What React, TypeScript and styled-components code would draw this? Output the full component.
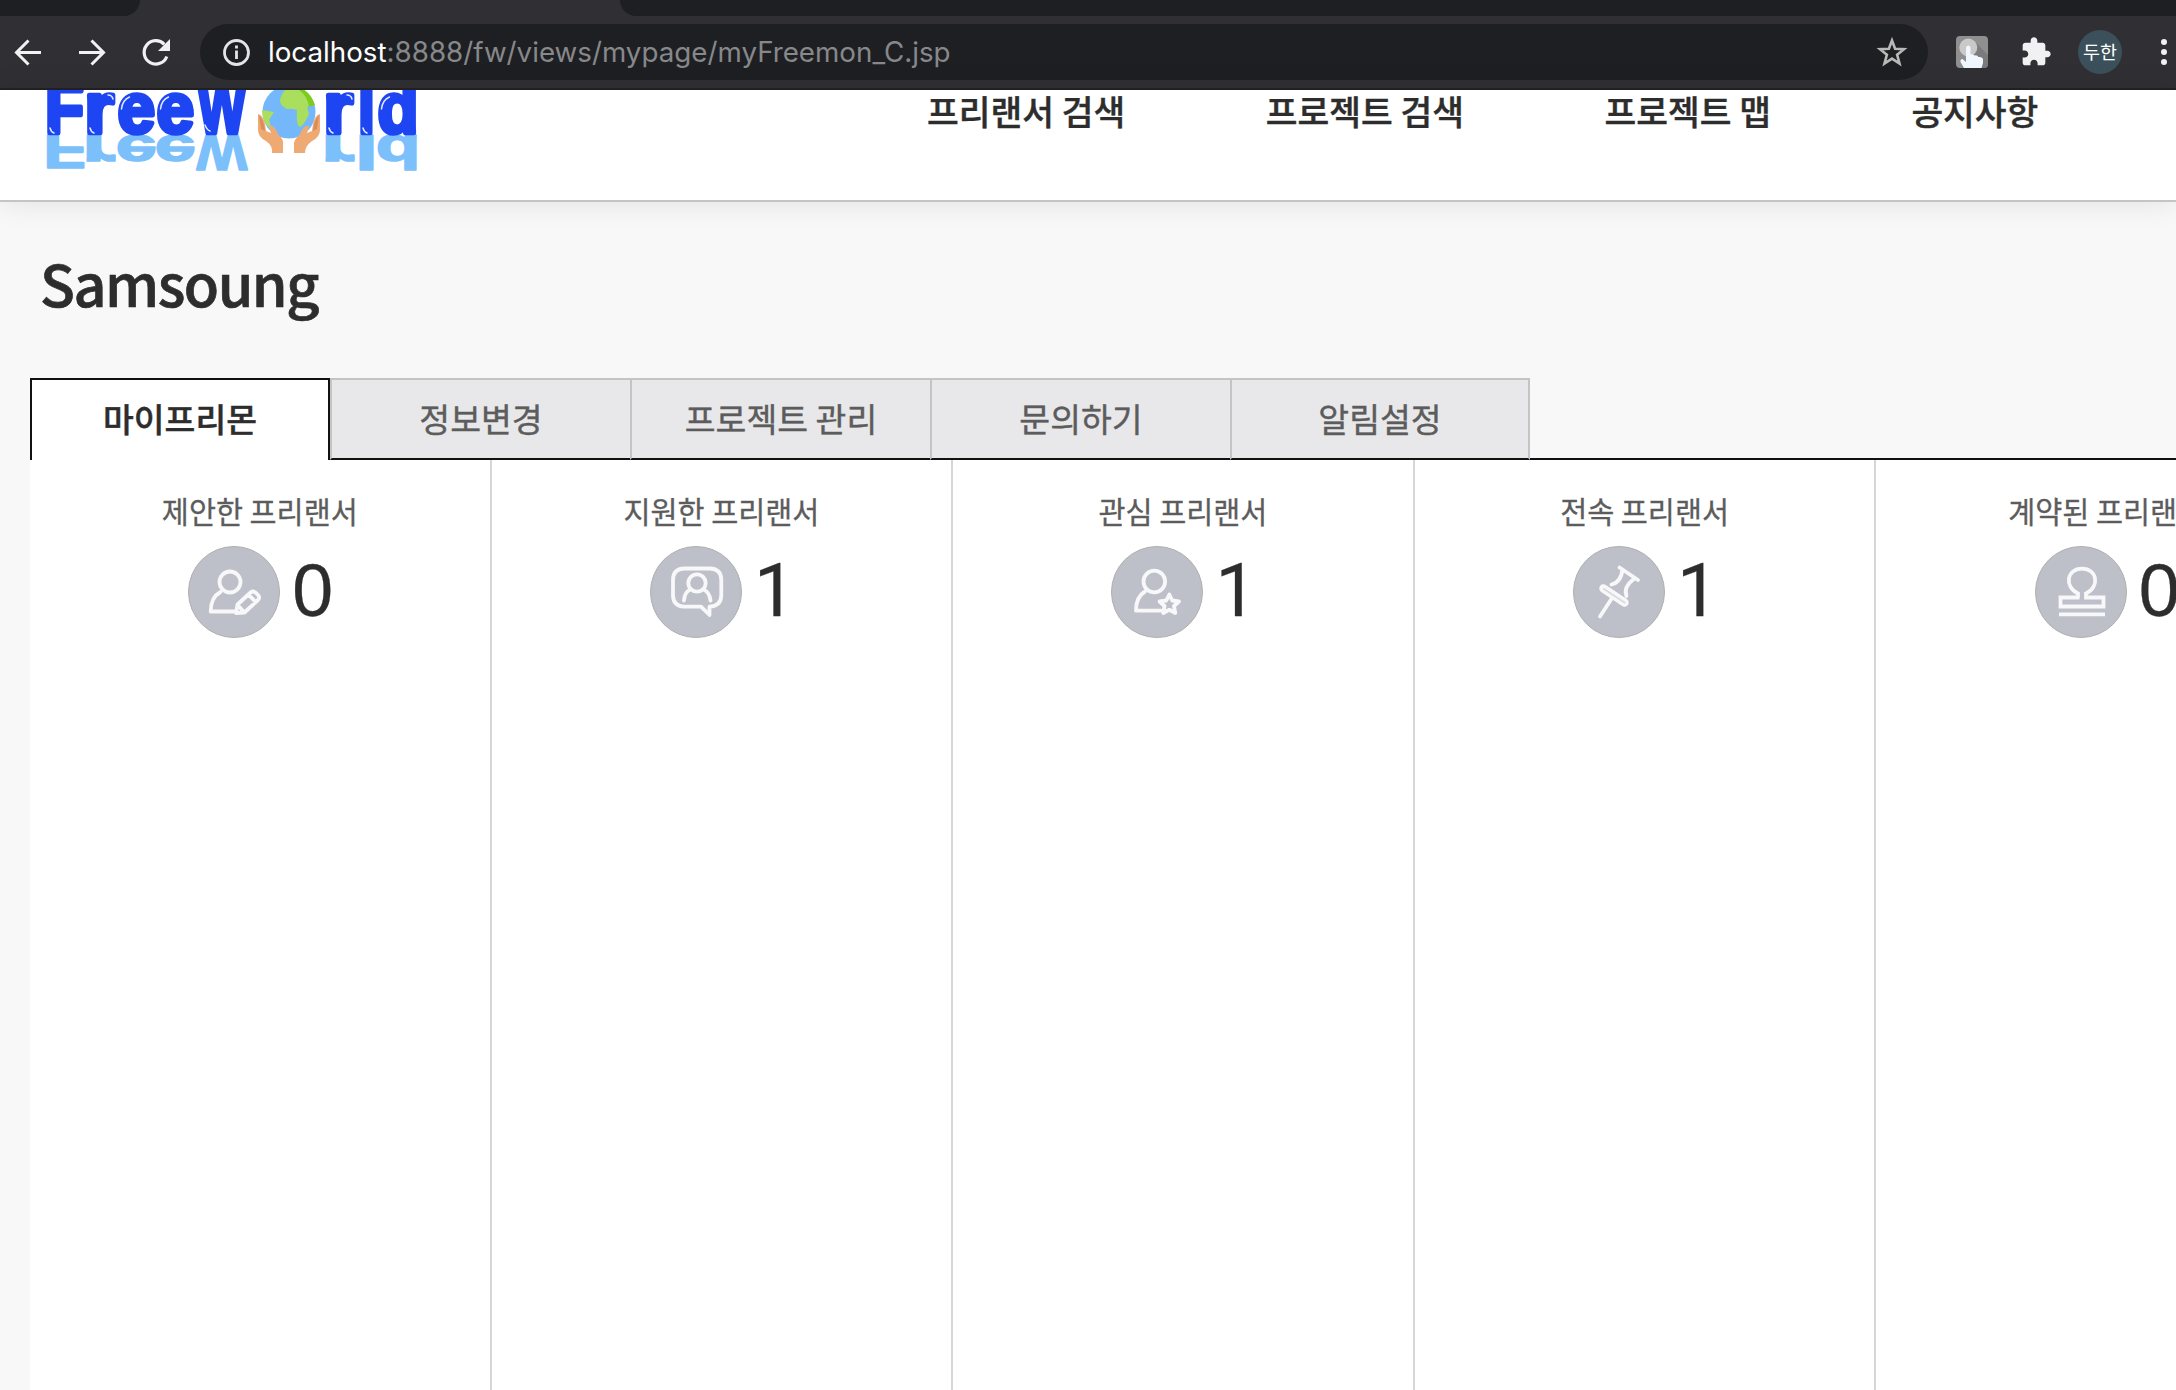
import React from "react";
import styled, { createGlobalStyle } from "styled-components";

const kr = `"Noto Sans CJK KR", "Noto Sans", sans-serif`;

const GlobalStyle = createGlobalStyle`
  *, *::before, *::after { box-sizing: border-box; }
  body { margin: 0; background: #f8f8f8; font-family: ${kr}; overflow: hidden; }
`;

const Page = styled.div`
  width: 2176px;
  height: 1390px;
  overflow: hidden;
  display: flex;
  flex-direction: column;
  background: #f8f8f8;
`;

/* browser chrome */
const Chrome = styled.div`
  flex: none;
  height: 90px;
  background: #302f33;
  border-bottom: 2px solid #232124;
`;
const TabStrip = styled.div`
  display: flex;
  justify-content: space-between;
  height: 16px;
`;
const InactiveTabs = styled.div<{ $width: number; $side: "left" | "right" }>`
  width: ${(p) => p.$width}px;
  background: #1e1f23;
  border-radius: ${(p) => (p.$side === "left" ? "0 0 16px 0" : "0 0 0 16px")};
`;
const Toolbar = styled.div`
  display: flex;
  align-items: center;
  height: 72px;
`;
const NavButtons = styled.div`
  flex: none;
  display: flex;
  gap: 32px;
  width: 200px;
  padding-left: 12px;
  svg { display: block; margin-top: -1px; }
`;
const Omnibox = styled.div`
  flex: none;
  display: flex;
  align-items: center;
  width: 1728px;
  height: 56px;
  padding: 0 20px;
  border-radius: 28px;
  background: #1e1f23;
`;
const Url = styled.div`
  flex: 1;
  padding-left: 16px;
  font: 400 27.75px/56px Inter, sans-serif;
  color: #87888a;
  white-space: nowrap;
`;
const Host = styled.span`
  color: #fff;
`;
const Actions = styled.div`
  flex: none;
  display: flex;
  align-items: center;
  padding-left: 28px;
`;
const Extension = styled.div`
  width: 32px;
  height: 32px;
  margin-right: 32px;
  svg { display: block; }
`;
const Puzzle = styled.svg`
  display: block;
  margin-right: 26px;
`;
const Avatar = styled.div`
  width: 44px;
  height: 44px;
  margin-right: 39px;
  border-radius: 50%;
  background: #3b505a;
  color: #fff;
  font: 400 18.5px/43px ${kr};
  text-align: center;
`;
const Dots = styled.div`
  display: flex;
  flex-direction: column;
  gap: 4px;
  i { width: 6px; height: 6px; border-radius: 50%; background: #f1f1f3; }
`;

/* site header */
const Header = styled.header`
  flex: none;
  position: relative;
  z-index: 1;
  display: flex;
  align-items: flex-start;
  height: 112px;
  padding-left: 40px;
  background: #fff;
  border-bottom: 2px solid #c4c4c4;
  box-shadow: 0 0 28px rgba(0, 0, 0, 0.1);
`;
const Logo = styled.svg`
  flex: none;
  display: block;
  width: 387px;
  height: 100px;
  margin-right: 500px;
`;
const MainNav = styled.nav`
  display: flex;
  gap: 140.5px;
`;
const NavLink = styled.span`
  font: 500 34.5px/41px ${kr};
  -webkit-text-stroke: 0.4px #2d2d2d;
  color: #2d2d2d;
  white-space: nowrap;
`;

const Title = styled.h1`
  flex: none;
  margin: 0;
  height: 176px;
  padding: 38px 0 0 40px;
  font: 500 57.5px/84px ${kr};
  letter-spacing: -1.5px;
  -webkit-text-stroke: 0.7px #2d2d2d;
  color: #2d2d2d;
`;

const Tabs = styled.div`
  flex: none;
  display: flex;
  height: 82px;
  padding-left: 30px;
`;
const Tab = styled.div<{ $active?: boolean }>`
  width: 300px;
  border: 2px solid ${(p) => (p.$active ? "#111" : "#c4c4c4")};
  ${(p) => !p.$active && "border-right-width: 0;"}
  border-bottom: ${(p) => (p.$active ? "0" : "2px solid #111")};
  background: ${(p) => (p.$active ? "#fff" : "#e8e8ea")};
  color: ${(p) => (p.$active ? "#2d2d2d" : "#5c5c5c")};
  -webkit-text-stroke: 0.4px currentColor;
  font: ${(p) => (p.$active ? 500 : 400)} 33.5px/75px ${kr};
  text-align: center;
  white-space: nowrap;
  &:last-of-type { border-right-width: 2px; }
`;
const TabRest = styled.span`
  flex: 1;
  border-bottom: 2px solid #111;
`;

const Board = styled.main`
  flex: 1;
  display: flex;
  margin-left: 30px;
  background: #fff;
  overflow: hidden;
`;
const Column = styled.section`
  flex: none;
  width: 461.6px;
  padding-top: 30px;
  border-right: 2px solid #d6d6d6;
  display: flex;
  flex-direction: column;
  align-items: center;
`;
const Label = styled.div`
  height: 56px;
  font: 400 29.4px/40px ${kr};
  -webkit-text-stroke: 0.3px #5c5c5c;
  color: #5c5c5c;
  white-space: nowrap;
`;
const Stat = styled.div`
  display: flex;
  align-items: center;
  height: 92px;
  gap: 12px;
  padding-left: 1px;
`;
const Badge = styled.div`
  width: 92px;
  height: 92px;
  border: 1.5px solid #b0b0b0;
  border-radius: 50%;
  background: #bdc0c8;
  svg { display: block; margin: -1px; }
`;
const Count = styled.span<{ $one: boolean }>`
  width: 40px;
  padding-bottom: 2px;
  font: 400 73.5px/90px ${(p) => (p.$one ? "Roboto" : '"Liberation Sans"')}, sans-serif;
  -webkit-text-stroke: 0.3px #2d2d2d;
  color: #2d2d2d;
`;

const icons: Record<string, React.ReactNode> = {
  propose: (
    <>
      <circle cx="42" cy="36" r="10.5" />
      <path d="M32.5 46C26 49.500 22.700 55 22.700 65.500H47" />
      <path d="M48 67L49.500 58.500L62.500 46.500Q65 44.500 67.500 46.500L70.500 49.500Q72 52 70 54L56.500 66.500ZM60.500 48.500L67.500 56M49.500 59L56 66" />
    </>
  ),
  apply: (
    <>
      <path d="M34 22.500H60Q71.300 23 71.300 34V49Q71.300 60 59.500 60.700V69L51 60.700H34Q23 60 23 49V34Q23 23 34 22.500Z" />
      <circle cx="47" cy="37" r="8.700" />
      <path d="M34 54.500Q34.500 46 40.500 43.500M60.500 54.500Q59.500 46 53.500 43.500" />
    </>
  ),
  interest: (
    <>
      <circle cx="43.3" cy="35.5" r="10.8" />
      <path d="M34 45.500C28 49 25 55 25 64.700H50" />
      <path d="M58.300 48.500L61.200 54.500L68 55.500L63 60L64.300 67L58.300 63.800L52.300 67L53.500 60L48.500 55.500L55.300 54.500Z" />
    </>
  ),
  exclusive: (
    <>
      <path d="M46.500 21.500L65 34M49.500 23.500C48.500 32 45 37 38.500 38.500M61.500 32.500C54 38 51 43.500 53.500 50M40 50.500L27 70.500" />
      <path strokeWidth="8.5" d="M30.500 42.500L51.500 56.500" />
      <path strokeWidth="2" stroke="#d9dbe0" d="M31 43L51.500 56.500" />
    </>
  ),
  contract: (
    <path
      strokeLinejoin="miter"
      strokeLinecap="butt"
      d="M43 51.500V47.500C29 41 31.500 22.700 47 22.700S65 41 51 47.500V51.500H68.500V60.500H25.500V51.500H44.500M50 51.500H52M24 68.400H70"
    />
  ),
};

const StatIcon = ({ name }: { name: string }) => (
  <svg width="92" height="92" viewBox="0 0 92 92" fill="none" stroke="#f8f8fa" strokeWidth="3.8" strokeLinecap="round" strokeLinejoin="round">
    {icons[name]}
  </svg>
);

const stats = [
  { label: "제안한 프리랜서", icon: "propose", count: 0 },
  { label: "지원한 프리랜서", icon: "apply", count: 1 },
  { label: "관심 프리랜서", icon: "interest", count: 1 },
  { label: "전속 프리랜서", icon: "exclusive", count: 1 },
  { label: "계약된 프리랜서", icon: "contract", count: 0 },
];

const letters: [string, number, number][] = [
  ["F", 7, 37],
  ["r", 47, 29],
  ["e", 78, 37],
  ["e", 117, 37],
  ["W", 156, 52],
  ["r", 286, 29],
  ["l", 320, 13],
  ["d", 338, 38],
];

/* horizontal ink extents of the bold face, in em */
const ink: Record<string, [number, number]> = {
  F: [0.067, 0.575],
  r: [0.067, 0.385],
  e: [0.04, 0.518],
  W: [0.004, 0.94],
  l: [0.069, 0.207],
  d: [0.041, 0.539],
};

const LogoLetters = ({ size, flip, color, stroke, base }: { size: number; flip?: boolean; color: string; stroke: number; base: number }) => (
  <g fontFamily="Liberation Sans, Arial, sans-serif" fontWeight="700" fontSize={size} fill={color} stroke={color} strokeWidth={stroke} strokeLinejoin="round">
    {letters.map(([ch, x, w], i) => {
      const [a, b] = ink[ch];
      const sx = (w - stroke) / ((b - a) * size);
      return (
        <text key={i} transform={`translate(${x + stroke / 2 - a * size * sx} ${base}) scale(${sx} ${flip ? -1 : 1})`}>
          {ch}
        </text>
      );
    })}
  </g>
);

const FreeWorldLogo = () => (
  <Logo viewBox="0 0 387 100">
    <LogoLetters size={49} flip color="#7cc0fb" stroke={1.6} base={45} />
    <LogoLetters size={73} color="#1d45f2" stroke={4.6} base={43} />
    <g fill="none" stroke="#dfe9ff" strokeWidth="1.5" strokeLinecap="round">
      <path d="M10 38q1 4 4 5M50 38q1 4 4 5M289 38q1 4 4 5M323 38q1 4 4 5M165 35q2 5 5 6" />
      <path d="M81.500 19q1-9 8-12M120.500 19q1-9 8-12M341.500 19q1-9 8-12M68 5q4 0 5 4M307 5q4 0 5 4" />
    </g>
    <circle cx="249" cy="22" r="26.500" fill="#74b8fb" />
    <path d="M240 10Q243-2 252-3Q268 0 273 15L267 17L269 24Q264 35 260 37Q256 37 257 20Q251 18 247 19Q240 16 240 10Z" fill="#a9df5c" />
    <path d="M259-3Q271 2 275 15L269 17Q267 4 257-1Z" fill="#7dcb1c" />
    <path d="M222 20L234 22L229 30L232 40Q222 33 222 20Z" fill="#a9df5c" />
    <path d="M218 24Q223 25 225 34L226 41L231 43L229 36Q234 34 238 44Q244 50 243 53V63H232Q233 56 226 51Q218 47 218 40Z" fill="#efaa74" />
    <path d="M280 24Q275 25 273 34L272 41L267 43L269 36Q264 34 260 44Q254 50 254 53V63H265Q265 56 272 51Q280 47 280 40Z" fill="#efaa74" />
    <path d="M219 25Q224 30 225 41L221 39M279 25Q274 30 273 41L277 39" fill="#dc8b5b" />
  </Logo>
);

export default function App() {
  return (
    <Page>
      <GlobalStyle />
      <Chrome>
        <TabStrip>
          <InactiveTabs $width={140} $side="left" />
          <InactiveTabs $width={1556} $side="right" />
        </TabStrip>
        <Toolbar>
          <NavButtons>
            <svg width="32" height="32" viewBox="0 0 32 32" fill="none" stroke="#f1f1f3" strokeWidth="3">
              <path d="M29 16.500H5M16.500 4.500L4.500 16.500L16.500 28.500" />
            </svg>
            <svg width="32" height="32" viewBox="0 0 32 32" fill="none" stroke="#f1f1f3" strokeWidth="3">
              <path d="M3 16.500H27M15.500 4.500L27.500 16.500L15.500 28.500" />
            </svg>
            <svg width="32" height="32" viewBox="0 0 32 32" fill="none" stroke="#f1f1f3" strokeWidth="3.200">
              <path d="M26.800 20.500A11.700 11.700 0 1 1 24.300 8.300" />
              <path d="M30 3V15H18Z" fill="#f1f1f3" stroke="none" />
            </svg>
          </NavButtons>
          <Omnibox>
            <svg width="32" height="32" viewBox="0 0 32 32" fill="none" stroke="#e4e4e6" strokeWidth="2.800">
              <circle cx="16.500" cy="16.500" r="12" />
              <path d="M16.500 14.500V23M16.500 9.500V12.500" />
            </svg>
            <Url>
              <Host>localhost</Host>:8888/fw/views/mypage/myFreemon_C.jsp
            </Url>
            <svg width="32" height="32" viewBox="0 0 32 32" fill="none" stroke="#b9b9b9" strokeWidth="2.600">
              <path d="M12 4.500L15.100 12.700L24 13.200L17.100 18.700L19.500 27.500L12 22.600L4.500 27.500L6.900 18.700L0 13.200L8.900 12.700Z" transform="translate(4)" />
            </svg>
          </Omnibox>
          <Actions>
            <Extension>
              <svg width="32" height="32" viewBox="0 0 32 32">
                <rect width="32" height="32" rx="4" fill="#8f8f8f" />
                <path d="M18 5L32 19V28Q32 32 28 32H15Z" fill="#7b7b7b" />
                <circle cx="12.300" cy="11.500" r="9" fill="#c9c9c9" />
                <path d="M10 12Q10 9.500 12.300 9.500T14.500 12V18.500Q17 17.500 18.500 19.500Q21 18.500 22.500 21Q26 20.500 27 23V27L25.500 32H8L4.500 26Q4 23 6.500 23L10 26Z" fill="#f1f7ff" />
              </svg>
            </Extension>
            <Puzzle width="32" height="32" viewBox="0 0 24 24" fill="#f1f1f3">
              <path d="M20.500 11H19V7c0-1.100-.9-2-2-2h-4V3.500C13 2.120 11.880 1 10.500 1S8 2.120 8 3.500V5H4c-1.100 0-1.990.9-1.990 2v3.800H3.500c1.490 0 2.700 1.210 2.700 2.700s-1.210 2.700-2.700 2.700H2V20c0 1.100.9 2 2 2h3.800v-1.500c0-1.490 1.210-2.700 2.700-2.700 1.490 0 2.700 1.210 2.700 2.700V22H17c1.100 0 2-.9 2-2v-4h1.500c1.380 0 2.500-1.120 2.500-2.500S21.880 11 20.500 11z" />
            </Puzzle>
            <Avatar>두한</Avatar>
            <Dots><i /><i /><i /></Dots>
          </Actions>
        </Toolbar>
      </Chrome>

      <Header>
        <FreeWorldLogo />
        <MainNav>
          <NavLink>프리랜서 검색</NavLink>
          <NavLink>프로젝트 검색</NavLink>
          <NavLink>프로젝트 맵</NavLink>
          <NavLink>공지사항</NavLink>
        </MainNav>
      </Header>

      <Title>Samsoung</Title>

      <Tabs>
        <Tab $active>마이프리몬</Tab>
        <Tab>정보변경</Tab>
        <Tab>프로젝트 관리</Tab>
        <Tab>문의하기</Tab>
        <Tab>알림설정</Tab>
        <TabRest />
      </Tabs>

      <Board>
        {stats.map((s) => (
          <Column key={s.label}>
            <Label>{s.label}</Label>
            <Stat>
              <Badge><StatIcon name={s.icon} /></Badge>
              <Count $one={s.count === 1}>{s.count}</Count>
            </Stat>
          </Column>
        ))}
      </Board>
    </Page>
  );
}
